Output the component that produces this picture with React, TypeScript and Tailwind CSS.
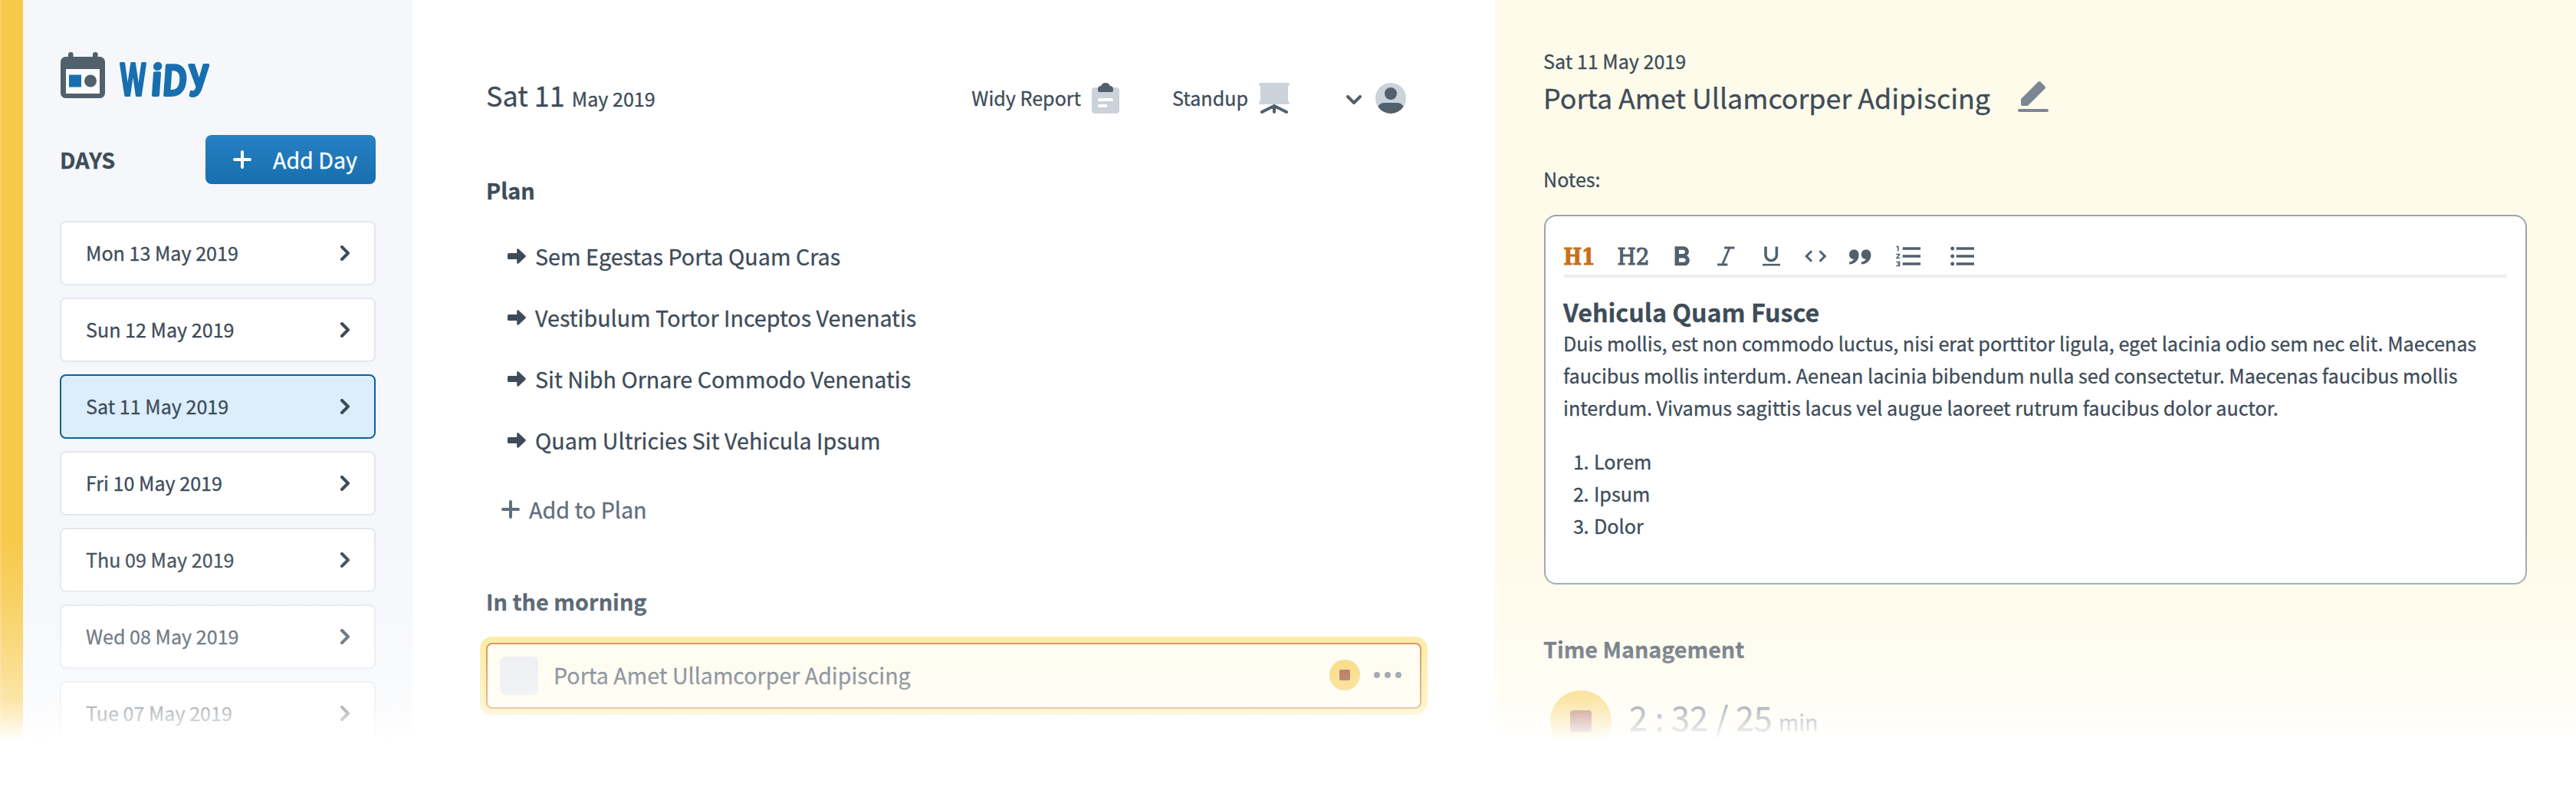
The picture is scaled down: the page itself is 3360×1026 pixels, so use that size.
import type { ReactNode } from "react";
import { MdFormatBold, MdFormatListBulleted, MdFormatListNumbered } from "react-icons/md";

const days = [
  "Mon 13 May 2019",
  "Sun 12 May 2019",
  "Sat 11 May 2019",
  "Fri 10 May 2019",
  "Thu 09 May 2019",
  "Wed 08 May 2019",
  "Tue 07 May 2019",
];
const activeDay = "Sat 11 May 2019";

const plan = [
  "Sem Egestas Porta Quam Cras",
  "Vestibulum Tortor Inceptos Venenatis",
  "Sit Nibh Ornare Commodo Venenatis",
  "Quam Ultricies Sit Vehicula Ipsum",
];

function Logo() {
  return (
    <svg width="204" height="68" viewBox="0 0 204 68" className="block overflow-visible" aria-label="Widy">
      <rect x="11" y="4" width="6.6" height="14" rx="3" fill="#52606d" />
      <rect x="43" y="4" width="6.6" height="14" rx="3" fill="#52606d" />
      <rect x="1" y="10" width="58" height="54" rx="6.5" fill="#52606d" />
      <rect x="8" y="26" width="44" height="32" fill="#f9fafc" />
      <rect x="12" y="33.5" width="16" height="16" fill="#186faf" />
      <circle cx="40" cy="41.5" r="8" fill="#52606d" />
      <g
        fill="#186faf"
        stroke="#186faf"
        strokeWidth="4"
        strokeLinejoin="round"
        fontFamily='"Noto Sans CJK JP", sans-serif'
        fontWeight="500"
      >
        <text transform="translate(78 60) scale(.57 1)" fontSize="74">w</text>
        <text transform="translate(117.5 60) skewX(-4)" fontSize="52">i</text>
        <text transform="translate(132.500 60) skewX(-4) scale(.88 1)" fontSize="52.500">D</text>
        <text transform="translate(168.500 48.500) scale(.92 1)" fontSize="51">y</text>
      </g>
    </svg>
  );
}

function Plus({ className }: { className: string }) {
  return (
    <svg width="24" height="24" viewBox="0 0 24 24" className={className} fill="none" stroke="currentColor" strokeWidth="4" strokeLinecap="round">
      <path d="M12 2v20M2 12h20" />
    </svg>
  );
}

function Sidebar() {
  return (
    <aside className="flex w-[538px] shrink-0">
      <div className="w-[30px] shrink-0 border-l-2 border-[#f8d16a] bg-[#f7c948]" />
      <div className="flex-1 bg-[#f5f7fb] px-12 pt-16">
        <Logo />
        <div className="mt-11 flex h-16 items-center justify-between">
          <h2 className="text-[28.8px] leading-10 font-bold">DAYS</h2>
          <button className="flex h-16 w-[222px] items-center rounded-lg bg-linear-to-b from-[#2680c2] to-[#186faf] pl-9 text-white">
            <Plus className="mr-7" />
            <span className="pb-px text-[28.6px] leading-10">Add Day</span>
          </button>
        </div>
        <ul className="mt-12 flex flex-col gap-4">
          {days.map((day) => (
            <li
              key={day}
              className={
                "flex h-[84px] items-center justify-between rounded-lg border-2 pr-8 pl-8 " +
                (day === activeDay ? "border-[#0f609b] bg-[#dceefb]" : "border-[#e4e7eb] bg-white")
              }
            >
              <span className="pb-0.5 text-[25.1px] leading-10">{day}</span>
              <svg width="12" height="20" viewBox="0 0 12 20" fill="none" stroke="currentColor" strokeWidth="4" strokeLinecap="round" strokeLinejoin="round">
                <path d="M2 2l8 8-8 8" />
              </svg>
            </li>
          ))}
        </ul>
      </div>
    </aside>
  );
}

function ClipboardIcon() {
  return (
    <svg width="36" height="40" viewBox="0 0 36 40">
      <rect y="6" width="36" height="34" rx="4" fill="#cbd2d9" />
      <path d="M12.2 4a6.2 6.2 0 0 1 11.6 0 4 4 0 0 1 4.2 4v2a2 2 0 0 1-2 2H10a2 2 0 0 1-2-2V8a4 4 0 0 1 4.200-4z" fill="#52606d" />
      <rect x="8" y="20" width="20" height="4" rx="2" fill="#fff" />
      <rect x="8" y="28" width="12.500" height="4" rx="2" fill="#fff" />
    </svg>
  );
}

function BoardIcon() {
  return (
    <svg width="40" height="40" viewBox="0 0 40 40">
      <path d="M20 30v8M20 30L4 38M20 30l16 8" fill="none" stroke="#52606d" strokeWidth="4" strokeLinecap="round" />
      <rect width="40" height="4" rx="2" fill="#cbd2d9" />
      <rect x="2" width="36" height="28" fill="#cbd2d9" />
      <rect y="24" width="40" height="4" rx="2" fill="#cbd2d9" />
    </svg>
  );
}

function UserIcon() {
  return (
    <svg width="40" height="40" viewBox="2 2 20 20">
      <circle cx="12" cy="12" r="10" fill="#cbd2d9" />
      <path d="M3.660 17.520A5 5 0 0 1 8 15h8a5 5 0 0 1 4.340 2.520 10 10 0 0 1-16.680 0z" fill="#52606d" />
      <circle cx="12" cy="9" r="4" fill="#52606d" />
    </svg>
  );
}

function Main() {
  return (
    <main className="w-[1412px] shrink-0 bg-white px-24 pt-[108px]">
      <header className="flex h-10 items-center pr-5">
        <h1 className="flex items-baseline pb-1.5 text-[36px] leading-10">
          Sat 11<span className="ml-[9px] text-[25.1px]">May 2019</span>
        </h1>
        <nav className="ml-auto flex items-center text-[25.1px] leading-10">
          <span className="mr-3.5 pb-0.5">Widy Report</span>
          <ClipboardIcon />
          <span className="mr-3.5 ml-[69px] pb-0.5">Standup</span>
          <BoardIcon />
          <svg width="20" height="12" viewBox="0 0 20 12" className="mt-1 mr-[18px] ml-[74px]" fill="none" stroke="#52606d" strokeWidth="4" strokeLinecap="round" strokeLinejoin="round">
            <path d="M2 2l8 8 8-8" />
          </svg>
          <UserIcon />
        </nav>
      </header>

      <h2 className="mt-20 text-[28.8px] leading-10 font-bold">Plan</h2>
      <ul className="mt-[26px] pl-7">
        {plan.map((item) => (
          <li key={item} className="flex h-20 items-center text-[28.7px] leading-10">
            <svg width="24" height="20" viewBox="0 0 24 20" className="mr-3" fill="currentColor">
              <rect y="6" width="16" height="8" rx="1.600" />
              <path d="M13.500 1.500v17L22.500 10z" stroke="currentColor" strokeWidth="2.600" strokeLinejoin="round" />
            </svg>
            <span className="pb-px">{item}</span>
          </li>
        ))}
      </ul>
      <div className="mt-[30px] flex h-10 items-center pl-5 text-[28.7px] leading-10 text-[#616e7c]">
        <Plus className="mr-3" />
        <span className="pb-px">Add to Plan</span>
      </div>

      <h2 className="mt-20 text-[28.8px] leading-10 font-bold">In the morning</h2>
      <div className="mt-[34px] flex h-[86px] items-center rounded-lg border-2 border-[#cb6e17] bg-[#fffbea] pr-6 pl-4 shadow-[0_0_0_8px_#fce588]">
        <div className="size-[50px] rounded-lg bg-[#e4e7eb]" />
        <span className="ml-5 pb-[3px] text-[28.6px] leading-10">Porta Amet Ullamcorper Adipiscing</span>
        <div className="mb-0.5 ml-auto flex size-10 items-center justify-center rounded-full bg-[#f7c948]">
          <div className="size-3.5 rounded-xs bg-[#8d2b0b]" />
        </div>
        <div className="mb-0.5 ml-[18px] flex gap-1.5">
          <i className="size-2 rounded-full bg-[#616e7c]" />
          <i className="size-2 rounded-full bg-[#616e7c]" />
          <i className="size-2 rounded-full bg-[#616e7c]" />
        </div>
      </div>
    </main>
  );
}

function Tool({ className, children }: { className: string; children: ReactNode }) {
  return (
    <svg width="40" height="40" viewBox="0 0 40 40" className={"shrink-0 overflow-visible " + className} fill="none" stroke="currentColor">
      {children}
    </svg>
  );
}

function Toolbar() {
  return (
    <div className="box-content flex h-11 border-b-4 border-[#eee] text-[#52606d]">
      <Tool className="text-[#cb6e17]">
        <text x="-.5" y="30.500" textLength="41" lengthAdjust="spacingAndGlyphs" fontFamily='"DejaVu Serif", serif' fontWeight="700" fontSize="29.500" fill="currentColor" strokeWidth="1">H1</text>
      </Tool>
      <Tool className="ml-[30px]">
        <text x="-.5" y="30.500" textLength="42" lengthAdjust="spacingAndGlyphs" fontFamily='"DejaVu Serif", serif' fontSize="29" fill="currentColor" strokeWidth="1.200">H2</text>
      </Tool>
      <MdFormatBold className="-mr-px ml-[22px] size-[43px] shrink-0" />
      <Tool className="ml-[17px]">
        <path d="M19.500 9H30M10.500 31H21M25 9L15.500 31" strokeWidth="2.800" strokeLinecap="square" />
      </Tool>
      <Tool className="ml-[19px]">
        <path d="M13 7.500v11a7.200 7.200 0 0 0 14.400 0v-11" strokeWidth="3.600" />
        <path d="M9 31.200h23" strokeWidth="2.600" />
      </Tool>
      <Tool className="ml-[18px]">
        <path d="M15 13.200L8.200 20l6.800 6.800M25.500 13.200l6.800 6.800-6.800 6.800" strokeWidth="3" />
      </Tool>
      <Tool className="ml-[18px]">
        <path
          d="M12.400 11.200c3.700 0 6.200 2.900 6.200 7 0 6.800-4.600 12-12.600 12.200v-2.900c3-.3 5.200-1.700 6-3.800-3.500.2-6-2.500-6-6 0-3.700 2.800-6.500 6.400-6.500zM28.200 11.200c3.700 0 6.200 2.900 6.200 7 0 6.800-4.600 12-12.600 12.200v-2.900c3-.3 5.200-1.700 6-3.800-3.500.2-6-2.500-6-6 0-3.700 2.800-6.500 6.400-6.500z"
          fill="currentColor"
          stroke="none"
        />
      </Tool>
      <MdFormatListNumbered className="ml-6 size-10 shrink-0" />
      <MdFormatListBulleted className="ml-[30px] size-10 shrink-0" />
    </div>
  );
}

function Details() {
  return (
    <section className="flex-1 bg-[#fffbea] pt-[59px] pr-16 pl-[63px]">
      <p className="text-[25.1px] leading-10">Sat 11 May 2019</p>
      <div className="mt-[3px] flex h-12 items-center">
        <h1 className="w-[615px] text-[35.8px] leading-[48px]">Porta Amet Ullamcorper Adipiscing</h1>
        <svg width="48" height="48" viewBox="0 0 24 24" fill="#7b8794">
          <path d="M4 14a1 1 0 0 1 .3-.7l11-11a1 1 0 0 1 1.400 0l3 3a1 1 0 0 1 0 1.400l-11 11a1 1 0 0 1-.7.3H5a1 1 0 0 1-1-1v-3z" />
          <rect x="2" y="20" width="20" height="2" rx="1" />
        </svg>
      </div>
      <p className="mt-[63px] text-[25.1px] leading-10">Notes:</p>
      <div className="mt-[27px] ml-px h-[482px] rounded-2xl border-2 border-[#9aa5b1] bg-white px-6 pt-8 text-[25.16px] leading-[42px]">
        <Toolbar />
        <div className="-ml-px">
          <h3 className="mt-6 text-[32.2px] leading-10 font-bold">Vehicula Quam Fusce</h3>
          <p>
            Duis mollis, est non commodo luctus, nisi erat porttitor ligula, eget lacinia odio sem nec elit. Maecenas
            faucibus mollis interdum. Aenean lacinia bibendum nulla sed consectetur. Maecenas faucibus mollis interdum.
            Vivamus sagittis lacus vel augue laoreet rutrum faucibus dolor auctor.
          </p>
          <ol className="mt-7 pl-[13px]">
            {["Lorem", "Ipsum", "Dolor"].map((word, i) => (
              <li key={word} className="flex">
                <span className="w-[27px] tracking-[-.5px]">{i + 1}.</span>
                {word}
              </li>
            ))}
          </ol>
        </div>
      </div>
      <h2 className="mt-16 text-[28.7px] leading-10 font-bold">Time Management</h2>
      <div className="mt-[34px] ml-[9px] flex h-20 items-center">
        <div className="flex size-20 items-center justify-center rounded-full bg-[#f7c948]">
          <div className="size-7 rounded bg-[#8d2b0b]" />
        </div>
        <p className="ml-[23px] pb-1.5 text-[43px] leading-[60px]">
          2 : 32 / 25<span className="ml-2 text-[28.6px]">min</span>
        </p>
      </div>
    </section>
  );
}

export default function App() {
  return (
    <div className="relative flex h-[1026px] w-[3360px] overflow-hidden bg-white font-['Noto_Sans_CJK_JP','Noto_Sans',sans-serif] text-[#3e4c59] [-webkit-text-stroke:0.3px]">
      <Sidebar />
      <Main />
      <Details />
      <div className="pointer-events-none absolute inset-0 bg-[linear-gradient(to_bottom,rgba(255,255,255,0)_696px,rgba(255,255,255,.13)_770px,rgba(255,255,255,.27)_830px,rgba(255,255,255,.52)_912px,#fff_966px)]" />
    </div>
  );
}
